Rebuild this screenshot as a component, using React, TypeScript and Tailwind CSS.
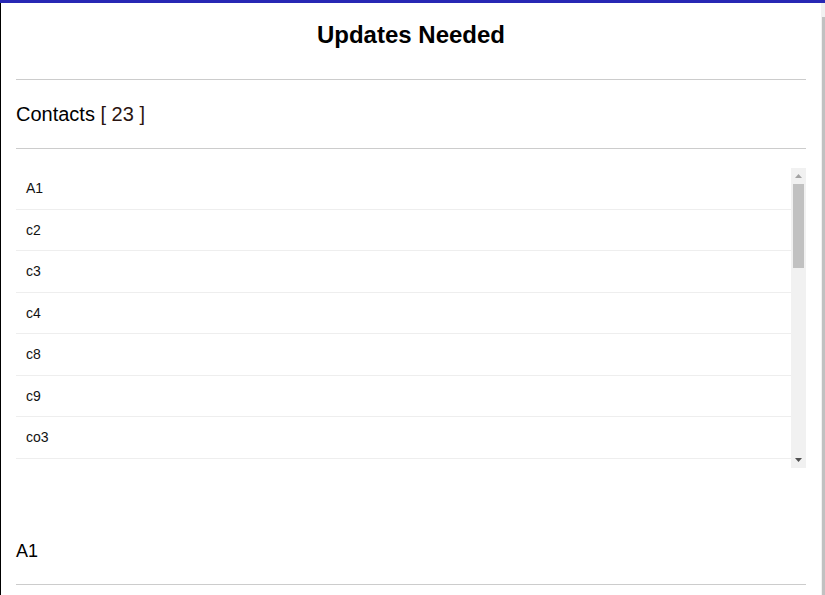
import React from "react";

const contacts: string[] = [
    "A1", "c2", "c3", "c4", "c8", "c9", "co3", "co4", "co5", "co7",
    "d1", "d2", "d5", "e1", "e3", "f2", "g1", "g4", "h2", "k1",
    "m3", "p1", "z9",
];

function ContactRow({ name }: { name: string }) {
    return (
        <li className="px-[10px] py-[10px] text-[14px] leading-[20.5px] text-[#111] border-b border-[#eeeeee]">
            {name}
        </li>
    );
}

// classic scrollbar drawn by hand, headless chrome hides the native one
function ListScrollbar() {
    return (
        <div className="w-[15px] h-full bg-[#f1f1f1] flex flex-col items-center">
            <div className="h-[16px] flex items-center justify-center">
                <svg width="7" height="4" viewBox="0 0 7 4">
                    <polygon points="3.5,0 7,4 0,4" fill="#a3a3a3" />
                </svg>
            </div>
            <div className="w-[11px] h-[84px] bg-[#c1c1c1]" />
            <div className="flex-1" />
            <div className="h-[16px] flex items-center justify-center">
                <svg width="7" height="4" viewBox="0 0 7 4">
                    <polygon points="0,0 7,0 3.5,4" fill="#505050" />
                </svg>
            </div>
        </div>
    );
}

export default function App() {
    return (
        <div className="w-[825px] h-[595px] overflow-hidden flex flex-col border-t-[3px] border-[#2828b4] bg-white font-['Liberation_Sans',Arial,sans-serif] text-black">
            <div className="flex flex-1 min-h-0">
                {/* main panel */}
                <div className="flex-1 border-l border-black px-[15px] pt-[18px]">
                    <h1 className="text-center text-[24px] leading-[28px] font-bold">Updates Needed</h1>
                    <hr className="mt-[30px] border-0 border-t border-[#cccccc]" />

                    <h2 className="mt-[22px] text-[20px] leading-[24px]">
                        Contacts <span className="text-[#2a1410]">[ {contacts.length} ]</span>
                    </h2>
                    <hr className="mt-[22px] border-0 border-t border-[#cccccc]" />

                    {/* list */}
                    <div className="mt-[19px] h-[300px] flex">
                        <ul className="flex-1 h-full overflow-hidden">
                            {contacts.map((c) => (
                                <ContactRow key={c} name={c} />
                            ))}
                        </ul>
                        <ListScrollbar />
                    </div>

                    <h2 className="mt-[72px] text-[18px] leading-[22px]">A1</h2>
                    <hr className="mt-[22px] border-0 border-t border-[#cccccc]" />
                </div>

                {/* clipped outer scrollbar */}
                <div className="w-[4px] bg-[#f1f1f1] pl-[1px] pt-[14px]">
                    <div className="h-full bg-[#c1c1c1]" />
                </div>
            </div>
        </div>
    );
}
